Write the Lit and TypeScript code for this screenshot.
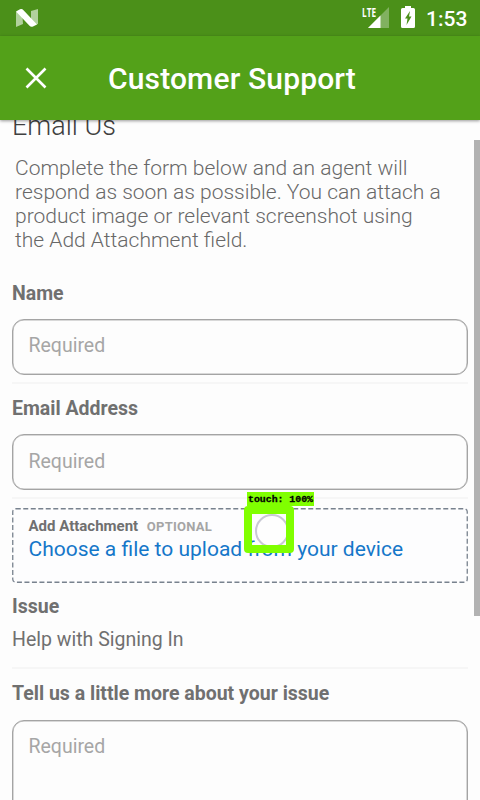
import { LitElement, html, css } from "lit";
import { customElement, property } from "lit/decorators.js";

@customElement("status-bar")
class StatusBar extends LitElement {
  static styles = css`
    :host { display: flex; height: 36px; box-sizing: border-box; background: #4b9019; color: #fff; align-items: center; padding: 0 12px 0 15px; }
    svg { display: block; flex: none; }
    .gap { flex: 1; }
    .signal { margin-right: 12px; }
    .battery { margin-right: 11px; }
    .lte { font: 700 12.500px "Open Sans", sans-serif; fill: #fff; }
    .time { font: 500 21px/36px Roboto, sans-serif; width: 42px; white-space: nowrap; padding-top: 1px; }
  `;
  render() {
    return html`
      <svg width="24" height="36" viewBox="0 0 24 36">
        <path d="M1 12L7 9L8 24L1 27ZM16 11L23 9V24L16 26Z" fill="#b1d19c" />
        <path d="M1 11.500L5 9.300Q7 8.600 8.500 10.200L22 24.500L18 26.500Q16 27.400 14.500 25.800Z" fill="#fff" />
      </svg>
      <div class="gap"></div>
      <svg class="signal" width="27" height="36" viewBox="0 0 27 36">
        <path d="M27 7V28H6Z" fill="#81b160" />
        <path d="M18.500 15.500V28H6Z" fill="#fff" />
        <path d="M0 6H14V17H0Z" fill="#4b9019" />
        <text class="lte" x="0" y="16.500" textLength="14" lengthAdjust="spacingAndGlyphs">LTE</text>
      </svg>
      <svg class="battery" width="14" height="36" viewBox="0 0 14 36">
        <path d="M4 6H10V8H12.500Q14 8 14 9.500V26.500Q14 28 12.500 28H1.500Q0 28 0 26.500V9.500Q0 8 1.500 8H4Z" fill="#fff" />
        <path d="M9 11L4 18.500H6.500L5.500 25L10.500 16.500H8Z" fill="#4b9019" />
      </svg>
      <div class="time">1:53</div>
    `;
  }
}

@customElement("form-field")
class FormField extends LitElement {
  @property() label = "";
  @property({ type: Boolean, reflect: true }) tall = false;
  static styles = css`
    :host { display: block; font-family: Roboto, sans-serif; }
    .label { font-size: 19.500px; line-height: 24px; font-weight: 700; color: #707070; white-space: nowrap; }
    .box { margin-top: 13px; height: 56px; box-sizing: border-box; border: 1px solid #a4a4a4; box-shadow: inset 0 0 0 .5px #b4b4b4; border-radius: 12px; padding: var(--field-inset, 13px) 15.500px 0; font-size: 19.500px; line-height: 25px; color: #a6a6a6; }
    :host([tall]) .box { height: 140px; margin-top: 14px; }
  `;
  render() {
    return html`<div class="label">${this.label}</div><div class="box"><span>Required</span></div>`;
  }
}

@customElement("touch-marker")
class TouchMarker extends LitElement {
  static styles = css`
    :host { position: absolute; left: 244px; top: 491px; width: 71px; height: 63px; }
    svg { display: block; }
    text { font: 700 9.500px "Liberation Mono", monospace; fill: #000; stroke: #000; stroke-width: .3px; }
  `;
  render() {
    return html`<svg width="71" height="63" viewBox="0 0 71 63">
      <circle cx="28" cy="40" r="16" fill="#fff" fill-opacity=".45" stroke="#c9c9d4" stroke-width="2" />
      <rect x="4" y="19" width="42" height="39" fill="none" stroke="#80ff00" stroke-width="8" stroke-linejoin="round" />
      <rect x="3" y="1" width="67" height="14" fill="#80ff00" />
      <text x="4" y="11" textLength="65" lengthAdjust="spacingAndGlyphs">touch: 100%</text>
    </svg>`;
  }
}

@customElement("app-root")
class AppRoot extends LitElement {
  static styles = css`
    :host { display: flex; flex-direction: column; position: relative; width: 480px; height: 800px; overflow: hidden; background: #fdfdfd; font-family: Roboto, sans-serif; }
    header { flex: none; height: 84px; background: #53a119; display: flex; align-items: center; box-shadow: 0 1px 3px rgba(0,0,0,.4); position: relative; z-index: 1; color: #fff; padding-left: 25px; }
    header svg { display: block; }
    h1 { margin: 2px 0 0 61px; font-size: 30px; letter-spacing: .15px; line-height: 36px; font-weight: 500; white-space: nowrap; }
    main { flex: 1; min-height: 0; overflow: hidden; padding: 0 12px; color: #707070; }
    h2 { margin: -11px 0 0; font-size: 27px; line-height: 34px; font-weight: 300; color: #404040; }
    p { margin: 13px 0 0 3px; font-size: 21px; line-height: 24px; font-weight: 300; color: #686868; white-space: nowrap; }
    form-field { margin-top: 30px; }
    .rule { height: 2px; background: #f6f6f6; margin-top: 7px; }
    .rule + form-field { margin-top: 13px; --field-inset: 14px; }
    .rule + form-field[tall] { --field-inset: 13px; }
    .upload { margin-top: 9px; height: 75px; display: block; position: relative; }
    .upload > svg { position: absolute; inset: 0; }
    .copy { position: relative; padding: 8px 16px 0 16.500px; white-space: nowrap; }
    .cap { font-size: 15px; line-height: 20px; font-weight: 700; }
    .opt { font-size: 13px; letter-spacing: .25px; color: #a5a5a5; margin-left: 5px; }
    .link { margin-top: -1px; font-size: 21px; line-height: 26px; color: #1577c9; }
    .issue { margin-top: 12px; font-size: 19.500px; line-height: 24px; font-weight: 700; }
    .value { margin-top: 8px; font-size: 19.500px; line-height: 25px; }
    .rule.last { margin-top: 15px; }
    .bar { position: absolute; right: 0; top: 140px; width: 6px; height: 476px; background: #b2b2b2; }
  `;
  render() {
    return html`
      <status-bar></status-bar>
      <header>
        <svg width="22" height="22" viewBox="0 0 22 22"><path d="M1.500 1.500L20.500 20.500M20.500 1.500L1.500 20.500" stroke="#fff" stroke-width="2.600" /></svg>
        <h1>Customer Support</h1>
      </header>
      <main>
        <h2>Email Us</h2>
        <p>Complete the form below and an agent will<br />respond as soon as possible. You can attach a<br />product image or relevant screenshot using<br />the Add Attachment field.</p>
        <form-field label="Name"></form-field>
        <div class="rule"></div>
        <form-field label="Email Address"></form-field>
        <div class="rule"></div>
        <div class="upload">
          <svg width="456" height="75"><rect x=".75" y=".75" width="454.500" height="73.500" rx="3" fill="#fdfdfe" stroke="#78828e" stroke-width="1.300" stroke-dasharray="5 2.500" /></svg>
          <div class="copy">
            <div class="cap">Add Attachment <span class="opt">OPTIONAL</span></div>
            <div class="link">Choose a file to upload from your device</div>
          </div>
        </div>
        <div class="issue">Issue</div>
        <div class="value">Help with Signing In</div>
        <div class="rule last"></div>
        <form-field label="Tell us a little more about your issue" tall></form-field>
      </main>
      <div class="bar"></div>
      <touch-marker></touch-marker>
    `;
  }
}
